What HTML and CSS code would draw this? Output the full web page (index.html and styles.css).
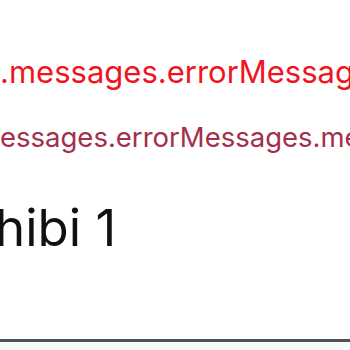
FILE: index.html
```html
<!DOCTYPE html>
<html>
<head>
<meta charset="utf-8">
<link rel="stylesheet" href="styles.css">
</head>
<body>
<div class="page">
  <div class="content">
    <p class="error-main">.messages.errorMessages.message</p>
    <p class="error-sub">essages.errorMessages.messages</p>
    <h1 class="title">hibi 1</h1>
  </div>
  <div class="footer"></div>
</div>
</body>
</html>
```

FILE: styles.css
```css
html, body {
  margin: 0;
  padding: 0;
  background: #ffffff;
}
.page {
  width: 350px;
  height: 350px;
  overflow: hidden;
  display: flex;
  flex-direction: column;
  font-family: Inter, "Noto Sans", sans-serif;
}
.content {
  flex: 1;
  display: flex;
  flex-direction: column;
  padding-top: 52px;
  white-space: nowrap;
  overflow: hidden;
}
.error-main {
  margin: 0;
  font-size: 31px;
  line-height: 40px;
  color: #f0141e;
}
.error-sub {
  margin: 28px 0 0 0;
  font-size: 27.5px;
  line-height: 34px;
  color: #a3304a;
}
.title {
  margin: 44px 0 0 -5px;
  font-size: 51px;
  line-height: 60px;
  font-weight: 400;
  color: #111111;
}
.footer {
  height: 8px;
  border-top: 3px solid #4b5557;
  background: #f7fbfb;
}
```
